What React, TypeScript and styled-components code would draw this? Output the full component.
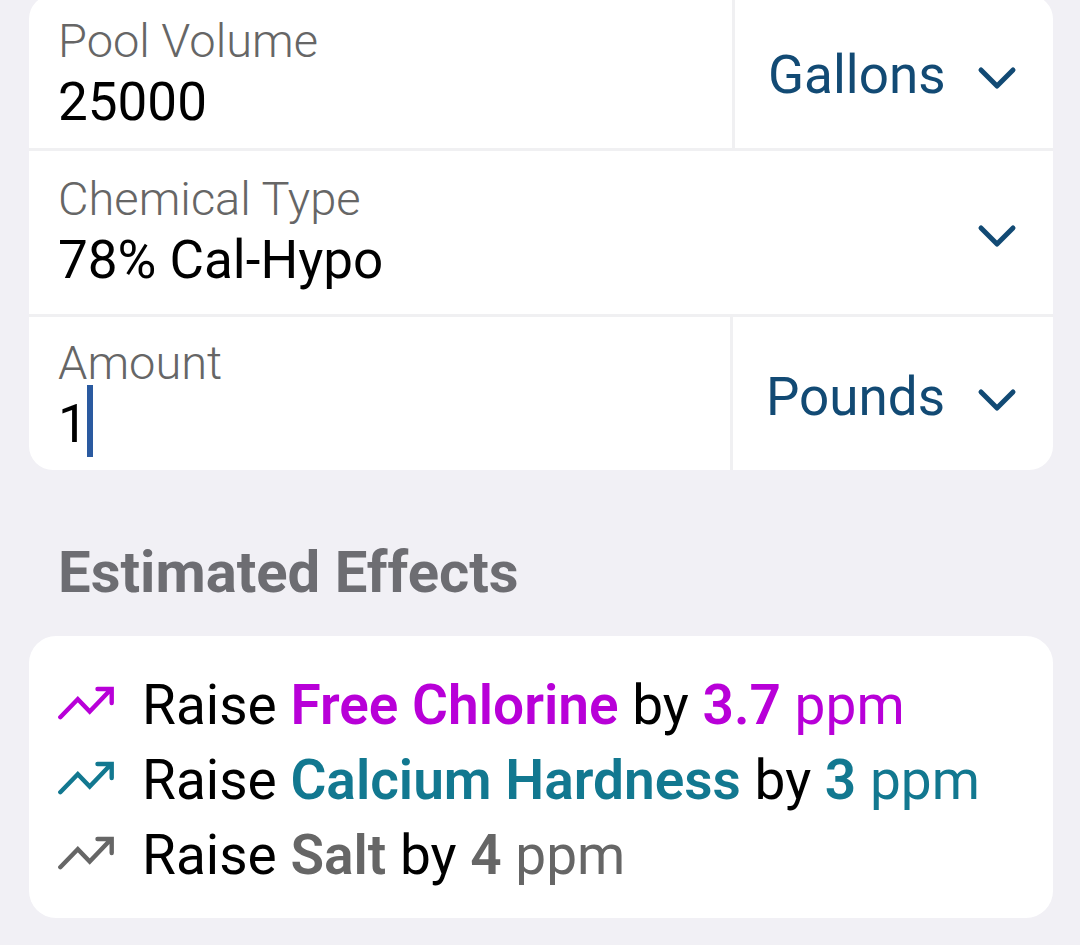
import { useState } from "react";
import styled, { createGlobalStyle } from "styled-components";

const GlobalStyle = createGlobalStyle`
  * {
    box-sizing: border-box;
  }
  body {
    margin: 0;
    background: #f1f0f5;
    color: #000;
    font-family: Roboto, "Liberation Sans", sans-serif;
  }
`;

const Page = styled.main`
  display: flow-root;
  padding: 0 27px 27px 29px;
`;

const FormCard = styled.form`
  margin-top: -5px;
  border-radius: 24px;
  background: #fff;
  overflow: hidden;
`;

const Row = styled.div`
  display: flex;

  & + & {
    border-top: 3px solid #f0f0f2;
  }
`;

const Field = styled.div<{ $roomy?: boolean }>`
  position: relative;
  flex: 1;
  min-width: 0;
  padding: ${(p) => (p.$roomy ? "20px 29px 22px" : "18px 29px 14px")};
`;

const Label = styled.label`
  display: block;
  margin-bottom: 1px;
  color: #666;
  font-size: 47px;
  font-weight: 300;
  line-height: 56px;
`;

const Entry = styled.div`
  display: flex;
  align-items: center;
  height: 64px;
`;

const Input = styled.input<{ $chars?: number }>`
  width: ${(p) => (p.$chars ? `${p.$chars}ch` : "100%")};
  height: 64px;
  padding: 0;
  border: 0;
  outline: 0;
  background: transparent;
  color: inherit;
  font: 400 53px / 64px Roboto, "Liberation Sans", sans-serif;
`;

const Caret = styled.span`
  flex: none;
  width: 6px;
  height: 72px;
  margin: -7px 0 -1px -1px;
  background: #2a5aa0;
`;

const Select = styled.select`
  appearance: none;
  width: 100%;
  height: 64px;
  padding: 0;
  border: 0;
  outline: 0;
  background: transparent;
  color: inherit;
  font: 400 53px / 64px Roboto, "Liberation Sans", sans-serif;
`;

const ChevronIcon = styled.svg`
  position: absolute;
  top: 50%;
  right: 36px;
  width: 40px;
  height: 24px;
  margin-top: -9px;
  color: #124a74;
  pointer-events: none;
`;

const UnitCell = styled.div<{ $width: number }>`
  position: relative;
  display: flex;
  align-items: center;
  flex: none;
  width: ${(p) => p.$width}px;
  padding: 6px 36px 0 33px;
  border-left: 3px solid #f0f0f2;
  color: #124a74;

  ${ChevronIcon} {
    margin-top: -6px;
  }
`;

const Heading = styled.h2`
  margin: 69px 0 31px;
  padding: 0 29px;
  color: #6d6d72;
  font-size: 58px;
  font-weight: 700;
  line-height: 66px;
`;

const EffectsCard = styled.ul`
  margin: 0;
  padding: 32px 29px 25px;
  border-radius: 27px;
  background: #fff;
  list-style: none;
`;

const EffectRow = styled.li`
  display: flex;
  align-items: center;
  gap: 28px;
  font-size: 55px;
  line-height: 75px;
`;

const TrendSvg = styled.svg<{ $tone: string }>`
  flex: none;
  width: 56px;
  height: 36px;
  margin-bottom: 6px;
  color: ${(p) => p.$tone};
`;

const Tone = styled.span<{ $tone: string }>`
  color: ${(p) => p.$tone};
`;

const StrongTone = styled.strong<{ $tone: string }>`
  color: ${(p) => p.$tone};
  font-weight: 600;
`;

function Chevron() {
  return (
    <ChevronIcon viewBox="0 0 40 24" fill="none" aria-hidden="true">
      <path d="M4 4 20 20 36 4" stroke="currentColor" strokeWidth="5" strokeLinecap="round" strokeLinejoin="round" />
    </ChevronIcon>
  );
}

function TrendUp({ tone }: { tone: string }) {
  return (
    <TrendSvg $tone={tone} viewBox="0 0 56 36" fill="none" aria-hidden="true">
      <path
        d="M2.3 32.2 19.8 14.2 31.7 26.6 53 4.2M39.5 4H53.7V18"
        stroke="currentColor"
        strokeWidth="4.4"
        strokeLinecap="round"
        strokeLinejoin="miter"
      />
    </TrendSvg>
  );
}

const effects = [
  { name: "Free Chlorine", value: "3.7", tone: "#b800d8" },
  { name: "Calcium Hardness", value: "3", tone: "#127890" },
  { name: "Salt", value: "4", tone: "#666666" },
];

export default function App() {
  const [volume, setVolume] = useState("25000");
  const [amount, setAmount] = useState("1");

  return (
    <>
      <GlobalStyle />
      <Page>
        <FormCard>
          <Row>
            <Field>
              <Label htmlFor="volume">Pool Volume</Label>
              <Entry>
                <Input id="volume" inputMode="numeric" value={volume} onChange={(e) => setVolume(e.target.value)} />
              </Entry>
            </Field>
            <UnitCell $width={321}>
              <Select aria-label="Volume unit" defaultValue="Gallons">
                <option>Gallons</option>
                <option>Liters</option>
              </Select>
              <Chevron />
            </UnitCell>
          </Row>
          <Row>
            <Field $roomy>
              <Label htmlFor="chemical">Chemical Type</Label>
              <Select id="chemical" defaultValue="78% Cal-Hypo">
                <option>78% Cal-Hypo</option>
              </Select>
              <Chevron />
            </Field>
          </Row>
          <Row>
            <Field>
              <Label htmlFor="amount">Amount</Label>
              <Entry>
                <Input
                  id="amount"
                  inputMode="decimal"
                  $chars={Math.max(1, amount.length)}
                  value={amount}
                  onChange={(e) => setAmount(e.target.value)}
                />
                <Caret aria-hidden="true" />
              </Entry>
            </Field>
            <UnitCell $width={323}>
              <Select aria-label="Amount unit" defaultValue="Pounds">
                <option>Pounds</option>
                <option>Ounces</option>
              </Select>
              <Chevron />
            </UnitCell>
          </Row>
        </FormCard>

        <Heading>Estimated Effects</Heading>
        <EffectsCard>
          {effects.map((effect) => (
            <EffectRow key={effect.name}>
              <TrendUp tone={effect.tone} />
              <span>
                Raise <StrongTone $tone={effect.tone}>{effect.name}</StrongTone> by{" "}
                <StrongTone $tone={effect.tone}>{effect.value}</StrongTone> <Tone $tone={effect.tone}>ppm</Tone>
              </span>
            </EffectRow>
          ))}
        </EffectsCard>
      </Page>
    </>
  );
}
